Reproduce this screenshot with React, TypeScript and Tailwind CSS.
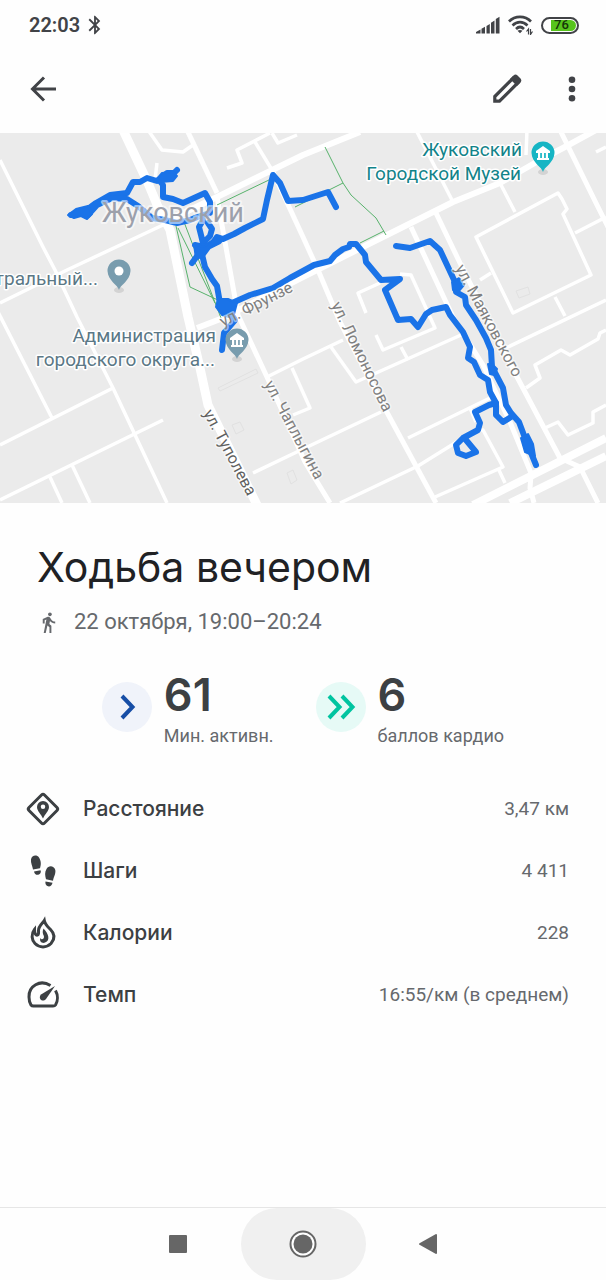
import type { ReactNode } from "react";
import { MdBluetooth, MdDirectionsWalk } from "react-icons/md";

const thinRoads = [
  "M0 160L43 247L55 270L77 317L113 388L167 503",
  "M0 303L67 270L163 225",
  "M-2 312L52 418",
  "M0 445L113 388",
  "M0 500L163 420",
  "M50 477L62 503",
  "M72 465L90 503",
  "M148 130L162 150L183 152L193 145",
  "M157 163L155 180",
  "M227 168L242 163L237 150L270 133",
  "M255 142L272 170",
  "M272 133L278 143L297 135",
  "M416 130L453 202",
  "M500 183L515 212",
  "M527 130L526 155",
  "M596 152L606 147",
  "M476 237L558 193L562 199L567 209L563 214L591 275L513 313Z",
  "M575 233L606 217",
  "M480 280L491 273",
  "M555 297L565 316",
  "M506 348L606 300",
  "M366 313L358 293L380 283",
  "M400 274L411 275L435 328L383 350L376 335",
  "M401 347L408 360",
  "M461 335L356 382L331 347",
  "M267 377L303 359L343 340",
  "M292 368L310 408L293 415",
  "M253 473L303 449L381 412",
  "M408 438L490 398",
  "M340 503L418 466L463 438",
  "M435 497L503 467L483 430L478 430",
  "M498 468L505 483",
  "M606 330L600 333L598 339L570 355L561 350L535 365L540 378L526 388",
  "M545 428L558 422L568 435L593 423L593 412L606 405",
  "M470 408L476 422",
];

const streets = [
  "M187 130L217 193",
  "M272 170L303 237L318 270L340 322L383 405L436 503",
  "M217 197L238 315L267 377L305 462L330 503",
  "M560 130L596 203L608 227",
  "M411 227L453 317L483 365L510 422L531 473",
  "M436 213L460 263L516 375L560 458L580 467L598 503",
  "M531 475L530 488L534 503",
];

const avenues = [
  "M173 218L217 197L303 155L360 132",
  "M197 328L223 318L303 277L383 237L453 202L500 183L540 160L563 148L596 130",
];

const parkPaths = [
  "M176 226L190 287L220 301",
  "M178 228L215 303",
  "M184 222L221 318",
  "M217 205L271 179",
  "M325 147L343 183L351 195L376 218L386 235",
  "M384 231L360 243",
  "M295 207L343 183",
];

const track = [
  "M71 215L84 212L96 203L110 195L127 193L133 182L140 182L147 178L157 181L167 173L174 173L177 170",
  "M88 215L97 205L112 198L127 199L138 206L152 218L165 220L177 223L190 220L200 216L210 213L210 202L205 193L194 198L183 203L173 199L163 197L163 185L159 180",
  "M203 220L199 227L203 243L210 236L212 229L208 223",
  "M192 263L203 248L195 245L204 247L213 243L217 237L223 239L234 234L245 228L263 219L267 200L273 175L280 183L288 201L303 200L328 192L336 207",
  "M201 250L205 267L212 279L217 286L220 303L232 303L250 295L273 288L290 278L303 271L314 265L330 261L335 255L343 249L349 247L350 244L356 244L365 255L366 262L381 280L400 279L385 290L398 320L411 319L418 327L426 314L432 310L446 307L450 315L463 332L470 347L468 358L474 362L480 375L488 380L490 392L496 403L496 415L503 422L511 417",
  "M396 246L410 248L430 241L440 250L455 282L456 292L465 297L466 305L476 320L486 338L491 350L492 367L503 388L506 405L511 413L519 422L525 438L536 465",
  "M496 403L489 405L475 412L480 423L478 430L463 438L456 445L458 453L466 456L476 452L466 440",
  "M223 303L235 320L224 333L222 350",
];

const trackSpots = [
  "M68 215L76 209L88 206L92 214L87 219L81 216L74 218Z",
  "M157 179L162 173L173 172L177 176L173 181L160 182Z",
  "M218 299L228 299L237 303L233 318L222 315L216 307Z",
  "M194 244L204 247L215 238L225 238L220 243L210 248L204 256L196 259Z",
  "M452 282L459 278L464 285L458 292L453 290Z",
  "M521 438L528 434L533 444L535 456L525 452Z",
  "M488 364L493 365L497 369L494 375L490 374Z",
];

function Pin({ x, y, color, museum }: { x: number; y: number; color: string; museum?: boolean }) {
  return (
    <g transform={`translate(${x} ${y})`}>
      <ellipse cx="0" cy="18" rx="5" ry="3" fill="#000" opacity="0.1" />
      <path d="M0 18C-1 13-11 9-11.500-1A11.500 11.500 0 0 1 11.500-1C11 9 1 13 0 18Z" fill={color} />
      {museum ? (
        <g fill="#fff">
          <path d="M-7-3L0-8L7-3V-1H-7Z" />
          <path d="M-5-1H-2.800V4H-5ZM2.800-1H5V4H2.800ZM-1.100-1H1.100V4H-1.100ZM-6 4H6V6H-6Z" />
        </g>
      ) : (
        <circle cx="0" cy="-1" r="4.500" fill="#fff" />
      )}
    </g>
  );
}

function RouteMap() {
  const halo = { stroke: "#fff", strokeLinejoin: "round" as const, paintOrder: "stroke" };
  return (
    <svg viewBox="0 133 606 370" className="block w-full bg-[#ebebeb]" role="img" aria-label="Карта маршрута">
      <g fill="none" stroke="#e1e1e1">
        <path d="M218 388L256 369L258 373L220 391ZM232 425L240 422L244 430L236 434ZM287 473L293 470L297 480L291 484ZM516 291L528 287L530 294L519 298Z" />
      </g>
      <g fill="none" stroke="#fff" strokeLinejoin="round">
        <g strokeWidth="3.500">{thinRoads.map((d) => <path key={d} d={d} />)}</g>
        <g strokeWidth="5">{streets.map((d) => <path key={d} d={d} />)}</g>
        <g strokeWidth="6">{avenues.map((d) => <path key={d} d={d} />)}</g>
        <path strokeWidth="9" d="M123 130L148 183L158 207L170 230L188 317L200 368L208 405L257 505" />
        <path strokeWidth="8" d="M473 505L606 438M510 503L606 456" />
      </g>
      <g fill="none" stroke="#57b26b" strokeWidth="1">{parkPaths.map((d) => <path key={d} d={d} />)}</g>
      <g fill="none" stroke="#1a73e8" strokeWidth="6" strokeLinejoin="round" strokeLinecap="round">
        {track.map((d) => <path key={d} d={d} />)}
      </g>
      <g fill="#1a73e8" stroke="#1a73e8" strokeWidth="2" strokeLinejoin="round">
        {trackSpots.map((d) => <path key={d} d={d} />)}
      </g>
      <g fontFamily="Roboto, sans-serif">
        <text x="102" y="222" fontSize="27" fill="#9ca0ab" {...halo} strokeWidth="4" strokeOpacity="0.550">Жуковский</text>
        <g fill="#808080" fontSize="16" {...halo} strokeWidth="3" strokeOpacity="0.500">
          <text transform="translate(223 327) rotate(-27)">ул. Фрунзе</text>
          <text transform="translate(331 305) rotate(64)">ул. Ломоносова</text>
          <text transform="translate(455 268) rotate(62)">ул. Маяковского</text>
          <text transform="translate(264 384) rotate(62)">ул. Чаплыгина</text>
          <text fill="#5f5f5f" transform="translate(203 413) rotate(62)">ул. Туполева</text>
        </g>
        <g fontSize="19" textAnchor="end" {...halo} strokeWidth="3">
          <text x="98" y="285" fill="#5b7886">тральный...</text>
          <text x="216" y="342" fill="#5b7886">Администрация</text>
          <text x="215" y="366" fill="#5b7886">городского округа...</text>
          <text x="522" y="156" fill="#128389">Жуковский</text>
          <text x="521" y="180" fill="#128389">Городской Музей</text>
        </g>
      </g>
      <Pin x={119} y={272} color="#789cae" />
      <Pin x={237} y={341} color="#789cae" museum />
      <Pin x={543} y={154} color="#16b5c4" museum />
    </svg>
  );
}

function StatusBar() {
  return (
    <div className="flex h-[46px] items-center justify-between pt-1 pr-[27px] pl-[29px] text-[#414347]">
      <div className="flex items-center gap-1">
        <span className="text-xl font-semibold">22:03</span>
        <MdBluetooth size={22} />
      </div>
      <div className="flex items-center gap-2">
        <svg width="24" height="18" viewBox="0 0 24 18" fill="currentColor" aria-hidden="true">
          <path d="M0 17.500V16L4.500 13.500V17.500ZM5.500 17.500V12.800L9 10.800V17.500ZM10.500 17.500V10L13.800 8V17.500ZM15 17.500V6.800L18.500 4.600V17.500ZM19.800 17.500V3L23.500 .8V17.500Z" />
        </svg>
        <svg width="25" height="20" viewBox="0 0 25 20" fill="none" stroke="currentColor" strokeWidth="2.600" aria-hidden="true">
          <path d="M1 6.500C7 .3 17 .3 23 6.500M4.500 10.500C9 6 15 6 19.500 10.500M8 14C10.500 11.500 13.500 11.500 16 14" />
          <path d="M9.500 15.800Q12 14 14.500 15.800L12 18.300Z" fill="currentColor" stroke="none" />
          <path d="M20.500 19.500V14L18.500 16.500M22.500 14V19.500L24.500 16.500" strokeWidth="1.200" />
        </svg>
        <div className="flex h-[17px] w-[38px] items-center justify-end rounded-full border-2 border-[#414347] p-px">
          <div className="flex h-[11px] w-[25px] items-center rounded-r-full bg-[#57c41c] pl-[3px] text-[13px] leading-3 font-medium text-[#143309]">
            76
          </div>
        </div>
      </div>
    </div>
  );
}

function Toolbar() {
  return (
    <header className="flex h-[87px] items-center justify-between pr-5 pb-0.5 pl-[29px] text-[#414347]">
      <button type="button" aria-label="Назад">
        <svg width="28" height="28" viewBox="0 0 28 28" fill="none" stroke="currentColor" strokeWidth="3">
          <path d="M27 14H4M15 2.500L3.500 14L15 25.500" />
        </svg>
      </button>
      <div className="flex items-center gap-9">
        <button type="button" aria-label="Изменить">
          <svg width="30" height="30" viewBox="0 0 30 30">
            <path d="M2.800 27.200V22.500L21 4.300L25.700 9L7.500 27.200Z" fill="none" stroke="currentColor" strokeWidth="3.200" />
            <path d="M18 5L21.500 1.500Q23.500-.3 25.500 1.500L28.500 4.500Q30 6.500 28.500 8.500L25 12Z" fill="currentColor" />
          </svg>
        </button>
        <button type="button" aria-label="Ещё" className="flex w-7 justify-center">
          <svg width="8" height="26" viewBox="0 0 8 26" fill="currentColor">
            <circle cx="4" cy="3.700" r="3.300" /><circle cx="4" cy="13" r="3.300" /><circle cx="4" cy="22.300" r="3.300" />
          </svg>
        </button>
      </div>
    </header>
  );
}

function Score({ value, label, tint, children }: { value: string; label: string; tint: string; children: ReactNode }) {
  return (
    <div className="flex gap-3">
      <div className={`mt-3 flex size-[50px] items-center justify-center rounded-full ${tint}`}>{children}</div>
      <div>
        <div className="font-['Inter'] text-[45px] leading-[50px] font-semibold text-[#3c4043]">{value}</div>
        <div className="mt-1 text-lg leading-6 text-[#66696d]">{label}</div>
      </div>
    </div>
  );
}

const icon = "size-9 text-[#3c4043]";

function DistanceIcon() {
  return (
    <svg viewBox="0 0 36 36" className={icon} aria-hidden="true">
      <path d="M16.500 4Q18 2.500 19.500 4L32 16.500Q33.500 18 32 19.500L19.500 32Q18 33.500 16.500 32L4 19.500Q2.500 18 4 16.500Z" fill="none" stroke="currentColor" strokeWidth="3" />
      <path fillRule="evenodd" d="M18 27.500C16 23 12 20 12 16A6 6 0 0 1 24 16C24 20 20 23 18 27.500ZM18 13.500A2.200 2.200 0 1 0 18 18A2.200 2.200 0 0 0 18 13.500Z" fill="currentColor" />
    </svg>
  );
}

function StepsIcon() {
  return (
    <svg viewBox="0 0 36 36" className={icon} aria-hidden="true" fill="currentColor">
      <path d="M8 16.500C7.500 13 5.500 10 6 6.500C6.500 2.500 11.500 1 14 4.500C16.500 8.500 16 12 15 15.200Z" />
      <path d="M9 18.500L15.500 17.200C17.500 21.500 10 24.500 9 18.500Z" />
      <path d="M21 26.200C20 22.500 19.500 19.500 21.500 16C23.500 12 29 12.500 30.300 17C31 21 28.500 24 28 27.800Z" />
      <path d="M20.500 28.500L27.500 29.800C26.500 35.500 19.500 34 20.500 28.500Z" />
    </svg>
  );
}

function CaloriesIcon() {
  return (
    <svg viewBox="0 0 36 36" className={icon} aria-hidden="true">
      <path d="M19.300 5.500C17.500 8.500 13.500 11 13.500 15.500C13.500 17.500 14 18.500 13 19.800C11 21 9.500 18.500 9.500 14.500C6 19 6.500 25 10 28.500C14.500 33 21.500 33 26 28.500C30.500 23.500 29.500 18.500 25.500 14.500C22.500 11.500 20 9.500 19.300 5.500Z" fill="none" stroke="currentColor" strokeWidth="3" />
      <path d="M18.500 13.500C16 19.500 20.500 20.500 18.500 23.500C17.500 24.800 16 24.500 15.500 23C14 26.500 17 28.500 19.500 27.800C26 26 23.500 18.500 18.500 13.500Z" fill="currentColor" />
    </svg>
  );
}

function PaceIcon() {
  return (
    <svg viewBox="0 0 36 36" className={icon} aria-hidden="true">
      <path d="M25.500 8.500C15 2 3.500 9 4 20Q4 24.500 6 28Q6.800 29 8.500 29H28Q29.800 29 30.500 28C33 24 33 18 30.500 13.500" fill="none" stroke="currentColor" strokeWidth="3" />
      <path d="M30 9L21 22C17.500 26 12.500 21.500 16 17.500Z" fill="currentColor" />
    </svg>
  );
}

const stats = [
  { label: "Расстояние", value: "3,47 км", Icon: DistanceIcon },
  { label: "Шаги", value: "4 411", Icon: StepsIcon },
  { label: "Калории", value: "228", Icon: CaloriesIcon },
  { label: "Темп", value: "16:55/км (в среднем)", Icon: PaceIcon },
];

function NavigationBar() {
  return (
    <nav className="mt-auto flex h-[73px] items-center justify-center border-t border-[#e6e6e6] text-[#666]">
      <button type="button" aria-label="Недавние" className="flex h-full w-[125px] items-center justify-center">
        <svg width="18" height="18" viewBox="0 0 18 18" fill="currentColor"><rect width="18" height="18" rx="1" /></svg>
      </button>
      <button type="button" aria-label="Домой" className="flex h-full w-[125px] items-center justify-center rounded-full bg-[#f0f0f0]">
        <svg width="28" height="28" viewBox="0 0 28 28">
          <circle cx="14" cy="14" r="12.500" fill="#fff" stroke="currentColor" strokeWidth="2" />
          <circle cx="14" cy="14" r="9.500" fill="currentColor" />
        </svg>
      </button>
      <button type="button" aria-label="Назад в системе" className="flex h-full w-[125px] items-center justify-center">
        <svg width="18" height="20" viewBox="0 0 18 20" fill="currentColor"><path d="M17 0Q18 0 18 1V19Q18 20 17 20L.5 10.800Q-.5 10 .5 9.200Z" /></svg>
      </button>
    </nav>
  );
}

export default function App() {
  return (
    <div className="flex min-h-screen flex-col bg-[#fefefe] font-['Roboto',sans-serif]">
      <StatusBar />
      <Toolbar />
      <RouteMap />
      <main>
        <section className="px-[37px] pt-10">
          <h1 className="font-['Inter'] text-[41px] leading-[48px] text-[#202124]">Ходьба вечером</h1>
          <p className="mt-4 flex items-center gap-[14px] text-[22px] leading-[30px] text-[#66696d]">
            <MdDirectionsWalk size={23} />
            22 октября, 19:00–20:24
          </p>
        </section>
        <section className="mt-[33px] flex justify-center gap-[42px]">
          <Score value="61" label="Мин. активн." tint="bg-[#f0f3fa]">
            <svg width="28" height="28" viewBox="0 0 28 28" fill="none" stroke="#174ea6" strokeWidth="4"><path d="M9 3L19.500 14L9 25" /></svg>
          </Score>
          <Score value="6" label="баллов кардио" tint="bg-[#e6faf6]">
            <svg width="30" height="28" viewBox="0 0 30 28" fill="none" stroke="#00c4a0" strokeWidth="4"><path d="M3 3L13.500 14L3 25M16 3L26.500 14L16 25" /></svg>
          </Score>
        </section>
        <dl className="mt-[30px] pr-[37px] pl-[25px]">
          {stats.map(({ label, value, Icon }) => (
            <div key={label} className="flex h-[62px] items-center justify-between">
              <dt className="flex items-center gap-[22px] font-['Inter'] text-[21px] font-medium text-[#3c4043]">
                <Icon />
                {label}
              </dt>
              <dd className="text-[19px] text-[#66696d]">{value}</dd>
            </div>
          ))}
        </dl>
      </main>
      <NavigationBar />
    </div>
  );
}
